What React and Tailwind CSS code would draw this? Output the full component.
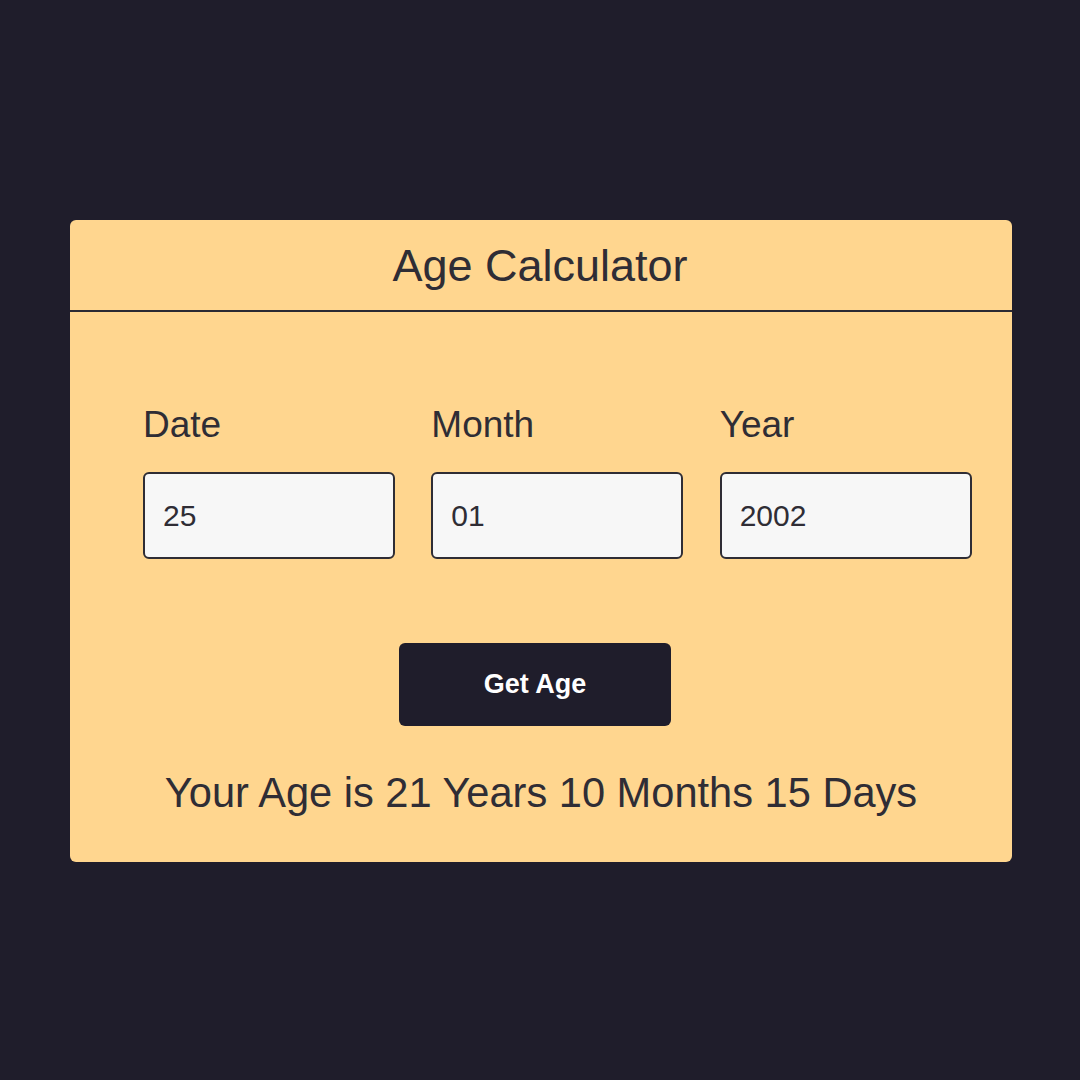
export default function App() {
  const fields = [
    { label: "Date", value: "25" },
    { label: "Month", value: "01" },
    { label: "Year", value: "2002" },
  ];
  return (
    <div
      className="w-[1080px] h-[1080px] bg-[#1f1d2b] pt-[220px] pl-[70px]"
      style={{ fontFamily: '"Liberation Sans", Arial, sans-serif' }}
    >
      <div className="w-[942px] h-[642px] bg-[#ffd68f] rounded-[6px] text-[#2f2d35] flex flex-col">
        <div className="h-[92px] border-b-2 border-[#2b2a33] flex items-center justify-center">
          <h1 className="text-[45px] leading-none pt-[1px] pr-[2px]">Age Calculator</h1>
        </div>
        <div className="pl-[73px] pr-[40px] pt-[92px] grid grid-cols-3 gap-x-[36px]">
          {fields.map((f) => (
            <div key={f.label} className="flex flex-col">
              <label className="text-[37px] leading-[42px]">{f.label}</label>
              <input
                readOnly
                value={f.value}
                className="mt-[26px] h-[87px] w-[252px] bg-[#f7f7f7] border-2 border-[#2f2d35] rounded-[6px] px-[18px] text-[30px] text-[#2f2d35] outline-none"
                style={{ fontFamily: '"Liberation Sans", Arial, sans-serif' }}
              />
            </div>
          ))}
        </div>
        <div className="flex justify-center mt-[84px] pr-[12px]">
          <button className="w-[272px] h-[83px] bg-[#1f1d2b] rounded-[6px] text-white text-[27px] font-bold">
            Get Age
          </button>
        </div>
        <p className="mt-[43px] text-center text-[41.6px] leading-[48px]">
          Your Age is 21 Years 10 Months 15 Days
        </p>
      </div>
    </div>
  );
}
